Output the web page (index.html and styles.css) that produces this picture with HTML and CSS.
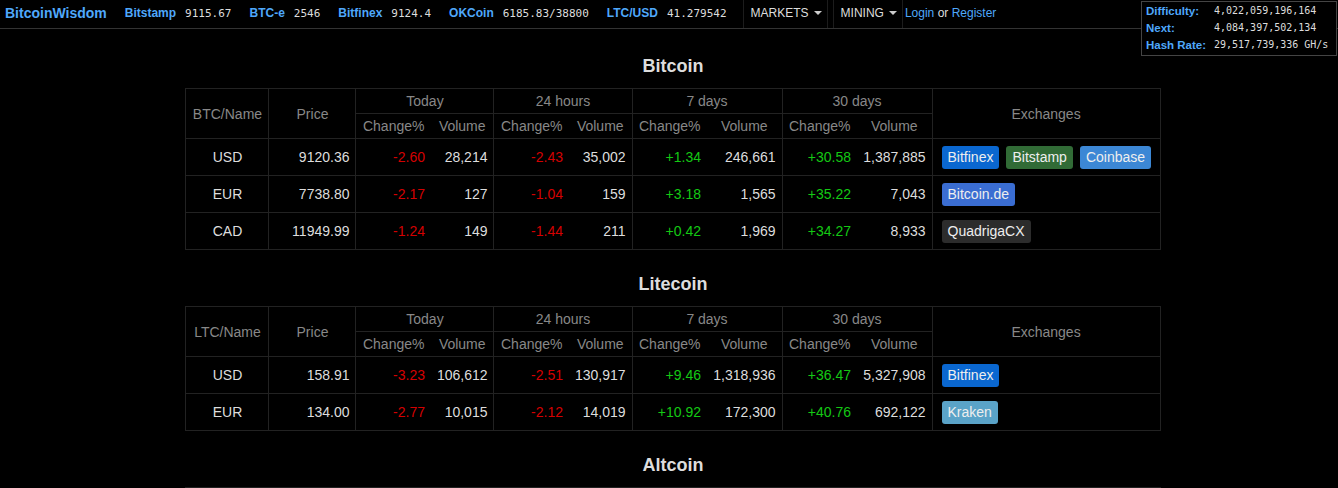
FILE: index.html
```html
<!DOCTYPE html>
<html>
<head>
<meta charset="utf-8">
<title>BitcoinWisdom</title>
<link rel="stylesheet" href="styles.css">
</head>
<body>
<nav class="navbar">
  <a class="brand">BitcoinWisdom</a>
  <span class="tick"><span class="tname">Bitstamp</span><span class="tval">9115.67</span></span>
  <span class="tick"><span class="tname">BTC-e</span><span class="tval">2546</span></span>
  <span class="tick"><span class="tname">Bitfinex</span><span class="tval">9124.4</span></span>
  <span class="tick"><span class="tname">OKCoin</span><span class="tval">6185.83/38800</span></span>
  <span class="tick"><span class="tname">LTC/USD</span><span class="tval">41.279542</span></span>
  <span class="dd dd-first">MARKETS<span class="caret"></span></span>
  <span class="dd">MINING<span class="caret"></span></span>
  <span class="auth"><a class="link">Login</a> or <a class="link">Register</a></span>
</nav>

<div class="mining">
  <div class="mrow"><span class="mlabel">Difficulty:</span><span class="mval">4,022,059,196,164</span></div>
  <div class="mrow"><span class="mlabel">Next:</span><span class="mval">4,084,397,502,134</span></div>
  <div class="mrow"><span class="mlabel">Hash Rate:</span><span class="mval">29,517,739,336 GH/s</span></div>
</div>

<main class="main">
  <h2 class="title title-first">Bitcoin</h2>
  <table class="mk">
    <colgroup>
      <col class="w-name"><col class="w-price">
      <col class="w-c1"><col class="w-v1"><col class="w-c1"><col class="w-v1">
      <col class="w-c2"><col class="w-c2"><col class="w-c2"><col class="w-c2">
      <col class="w-ex">
    </colgroup>
    <thead>
      <tr>
        <th rowspan="2">BTC/Name</th>
        <th rowspan="2">Price</th>
        <th colspan="2">Today</th>
        <th colspan="2">24 hours</th>
        <th colspan="2">7 days</th>
        <th colspan="2">30 days</th>
        <th rowspan="2">Exchanges</th>
      </tr>
      <tr>
        <th class="c">Change%</th><th class="v">Volume</th>
        <th class="c">Change%</th><th class="v">Volume</th>
        <th class="c">Change%</th><th class="v">Volume</th>
        <th class="c">Change%</th><th class="v">Volume</th>
      </tr>
    </thead>
    <tbody>
      <tr>
        <td class="nm">USD</td><td class="num">9120.36</td>
        <td class="c num dn">-2.60</td><td class="v num">28,214</td>
        <td class="c num dn">-2.43</td><td class="v num">35,002</td>
        <td class="c num up">+1.34</td><td class="v num">246,661</td>
        <td class="c num up">+30.58</td><td class="v num">1,387,885</td>
        <td class="ex"><div class="btns"><span class="btn b-bitfinex">Bitfinex</span><span class="btn b-bitstamp">Bitstamp</span><span class="btn b-coinbase">Coinbase</span></div></td>
      </tr>
      <tr>
        <td class="nm">EUR</td><td class="num">7738.80</td>
        <td class="c num dn">-2.17</td><td class="v num">127</td>
        <td class="c num dn">-1.04</td><td class="v num">159</td>
        <td class="c num up">+3.18</td><td class="v num">1,565</td>
        <td class="c num up">+35.22</td><td class="v num">7,043</td>
        <td class="ex"><div class="btns"><span class="btn b-bitcoinde">Bitcoin.de</span></div></td>
      </tr>
      <tr>
        <td class="nm">CAD</td><td class="num">11949.99</td>
        <td class="c num dn">-1.24</td><td class="v num">149</td>
        <td class="c num dn">-1.44</td><td class="v num">211</td>
        <td class="c num up">+0.42</td><td class="v num">1,969</td>
        <td class="c num up">+34.27</td><td class="v num">8,933</td>
        <td class="ex"><div class="btns"><span class="btn b-quadriga">QuadrigaCX</span></div></td>
      </tr>
    </tbody>
  </table>

  <h2 class="title">Litecoin</h2>
  <table class="mk">
    <colgroup>
      <col class="w-name"><col class="w-price">
      <col class="w-c1"><col class="w-v1"><col class="w-c1"><col class="w-v1">
      <col class="w-c2"><col class="w-c2"><col class="w-c2"><col class="w-c2">
      <col class="w-ex">
    </colgroup>
    <thead>
      <tr>
        <th rowspan="2">LTC/Name</th>
        <th rowspan="2">Price</th>
        <th colspan="2">Today</th>
        <th colspan="2">24 hours</th>
        <th colspan="2">7 days</th>
        <th colspan="2">30 days</th>
        <th rowspan="2">Exchanges</th>
      </tr>
      <tr>
        <th class="c">Change%</th><th class="v">Volume</th>
        <th class="c">Change%</th><th class="v">Volume</th>
        <th class="c">Change%</th><th class="v">Volume</th>
        <th class="c">Change%</th><th class="v">Volume</th>
      </tr>
    </thead>
    <tbody>
      <tr>
        <td class="nm">USD</td><td class="num">158.91</td>
        <td class="c num dn">-3.23</td><td class="v num">106,612</td>
        <td class="c num dn">-2.51</td><td class="v num">130,917</td>
        <td class="c num up">+9.46</td><td class="v num">1,318,936</td>
        <td class="c num up">+36.47</td><td class="v num">5,327,908</td>
        <td class="ex"><div class="btns"><span class="btn b-bitfinex">Bitfinex</span></div></td>
      </tr>
      <tr>
        <td class="nm">EUR</td><td class="num">134.00</td>
        <td class="c num dn">-2.77</td><td class="v num">10,015</td>
        <td class="c num dn">-2.12</td><td class="v num">14,019</td>
        <td class="c num up">+10.92</td><td class="v num">172,300</td>
        <td class="c num up">+40.76</td><td class="v num">692,122</td>
        <td class="ex"><div class="btns"><span class="btn b-kraken">Kraken</span></div></td>
      </tr>
    </tbody>
  </table>

  <h2 class="title">Altcoin</h2>
  <table class="mk">
    <colgroup>
      <col class="w-name"><col class="w-price">
      <col class="w-c1"><col class="w-v1"><col class="w-c1"><col class="w-v1">
      <col class="w-c2"><col class="w-c2"><col class="w-c2"><col class="w-c2">
      <col class="w-ex">
    </colgroup>
    <thead>
      <tr>
        <th rowspan="2">Name</th>
        <th rowspan="2">Price</th>
        <th colspan="2">Today</th>
        <th colspan="2">24 hours</th>
        <th colspan="2">7 days</th>
        <th colspan="2">30 days</th>
        <th rowspan="2">Exchanges</th>
      </tr>
      <tr>
        <th class="c">Change%</th><th class="v">Volume</th>
        <th class="c">Change%</th><th class="v">Volume</th>
        <th class="c">Change%</th><th class="v">Volume</th>
        <th class="c">Change%</th><th class="v">Volume</th>
      </tr>
    </thead>
  </table>
</main>
</body>
</html>
```

FILE: styles.css
```css
html, body {
  margin: 0;
  padding: 0;
  background: #000;
}
body {
  font-family: "Liberation Sans", Arial, sans-serif;
  color: #ddd;
  font-size: 14px;
}

/* navbar */
.navbar {
  display: flex;
  align-items: center;
  height: 26px;
  padding-bottom: 2px;
  border-bottom: 1px solid #333;
  padding-left: 5px;
  white-space: nowrap;
}
.brand {
  font-weight: bold;
  font-size: 14px;
  color: #4fa8fb;
}
.tick {
  margin-left: 18px;
  display: flex;
  align-items: center;
}
.tname {
  font-weight: bold;
  font-size: 12px;
  color: #4fa8fb;
}
.tval {
  margin-left: 9px;
  font-family: "DejaVu Sans Mono", "Liberation Mono", monospace;
  font-size: 11px;
  color: #ddd;
}
.dd {
  display: flex;
  align-items: center;
  align-self: flex-start;
  height: 28px;
  box-sizing: border-box;
  padding: 0 5px 2px 7px;
  border-left: 1px solid #1c1c1c;
  border-right: 1px solid #1c1c1c;
  font-size: 12px;
  color: #ddd;
  margin-left: 5px;
}
.dd-first {
  margin-left: 16px;
}
.caret {
  display: inline-block;
  margin-left: 5px;
  width: 0;
  height: 0;
  border-left: 4px solid transparent;
  border-right: 4px solid transparent;
  border-top: 4px solid #ccc;
}
.auth {
  margin-left: 2px;
  font-size: 12px;
  color: #ddd;
}
.link {
  color: #4fa8fb;
}

/* mining popup */
.mining {
  position: absolute;
  top: 1px;
  right: 1px;
  width: 186px;
  padding: 0 4px 2px 4px;
  border: 1px solid #444;
  background: #000;
}
.mrow {
  display: flex;
  align-items: center;
  height: 17px;
}
.mlabel {
  width: 68px;
  font-weight: bold;
  font-size: 11.5px;
  color: #4fa8fb;
}
.mval {
  font-family: "DejaVu Sans Mono", "Liberation Mono", monospace;
  font-size: 10px;
  color: #ddd;
}

/* main */
.main {
  display: flex;
  flex-direction: column;
  align-items: center;
  padding-left: 8px;
}
.title {
  margin: 24px 0 12px;
  font-size: 18px;
  line-height: 20px;
  font-weight: bold;
  color: #ddd;
}
.title-first {
  margin-top: 27px;
}

.mk {
  width: 974px;
  table-layout: fixed;
  border-collapse: collapse;
  border: 1px solid #222;
  font-size: 14px;
}
.w-name { width: 83px; }
.w-price { width: 87px; }
.w-c1 { width: 75px; }
.w-v1 { width: 63px; }
.w-c2 { width: 75px; }
.w-ex { width: 228px; }

.mk th {
  font-weight: normal;
  color: #888;
  line-height: 20px;
  padding: 2px 6px;
  border: 1px solid #222;
  text-align: center;
  white-space: nowrap;
}
.mk td {
  line-height: 20px;
  padding: 8px 6px;
  border: 1px solid #222;
  color: #ddd;
  white-space: nowrap;
}
.mk .c { border-right: none; }
.mk .v { border-left: none; }
.nm { text-align: center; }
.num { text-align: right; }
.dn { color: #d40000 !important; }
.up { color: #14c814 !important; }

.mk td.ex {
  padding: 6px 6px 6px 9px;
}
.btns {
  display: flex;
  gap: 7px;
}
.btn {
  display: inline-block;
  padding: 2px 6px;
  line-height: 19px;
  border-radius: 3px;
  color: #eee;
  font-size: 14px;
}
.b-bitfinex { background: #0a67d0; }
.b-bitstamp { background: #316b36; }
.b-coinbase { background: #3c87d5; }
.b-bitcoinde { background: #3a6dd2; }
.b-quadriga { background: #2c2c2c; }
.b-kraken { background: #5aa3c8; }
```
